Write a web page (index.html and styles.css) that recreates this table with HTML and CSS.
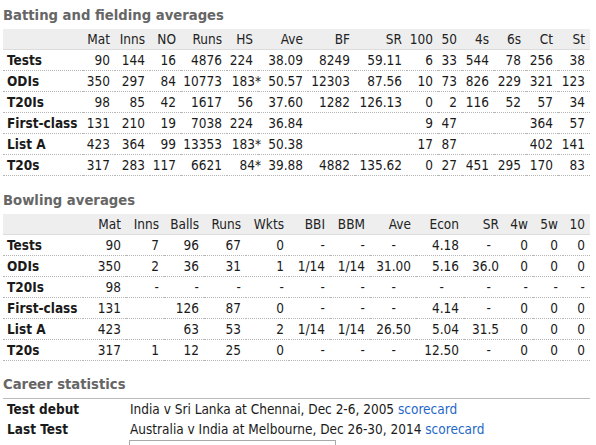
FILE: index.html
```html
<!DOCTYPE html>
<html>
<head>
<meta charset="utf-8">
<link rel="stylesheet" href="styles.css">
</head>
<body>
<div class="page">
  <h2 class="sec-title first">Batting and fielding averages</h2>
  <table class="stats bat">
    <colgroup>
      <col class="w80"><col class="w32"><col class="w35"><col class="w31"><col class="w46"><col class="w31"><col class="w50"><col class="w47"><col class="w52"><col class="w31"><col class="w24"><col class="w32"><col class="w32"><col class="w32"><col class="w32">
    </colgroup>
    <thead>
      <tr><th></th><th>Mat</th><th>Inns</th><th>NO</th><th>Runs</th><th>HS</th><th>Ave</th><th>BF</th><th>SR</th><th>100</th><th>50</th><th>4s</th><th>6s</th><th>Ct</th><th>St</th></tr>
    </thead>
    <tbody>
      <tr><td class="lbl">Tests</td><td>90</td><td>144</td><td>16</td><td>4876</td><td>224</td><td>38.09</td><td>8249</td><td>59.11</td><td>6</td><td>33</td><td>544</td><td>78</td><td>256</td><td>38</td></tr>
      <tr><td class="lbl">ODIs</td><td>350</td><td>297</td><td>84</td><td>10773</td><td>183<span class="no">*</span></td><td>50.57</td><td>12303</td><td>87.56</td><td>10</td><td>73</td><td>826</td><td>229</td><td>321</td><td>123</td></tr>
      <tr><td class="lbl">T20Is</td><td>98</td><td>85</td><td>42</td><td>1617</td><td>56</td><td>37.60</td><td>1282</td><td>126.13</td><td>0</td><td>2</td><td>116</td><td>52</td><td>57</td><td>34</td></tr>
      <tr><td class="lbl">First-class</td><td>131</td><td>210</td><td>19</td><td>7038</td><td>224</td><td>36.84</td><td></td><td></td><td>9</td><td>47</td><td></td><td></td><td>364</td><td>57</td></tr>
      <tr><td class="lbl">List A</td><td>423</td><td>364</td><td>99</td><td>13353</td><td>183<span class="no">*</span></td><td>50.38</td><td></td><td></td><td>17</td><td>87</td><td></td><td></td><td>402</td><td>141</td></tr>
      <tr><td class="lbl">T20s</td><td>317</td><td>283</td><td>117</td><td>6621</td><td>84<span class="no">*</span></td><td>39.88</td><td>4882</td><td>135.62</td><td>0</td><td>27</td><td>451</td><td>295</td><td>170</td><td>83</td></tr>
    </tbody>
  </table>

  <h2 class="sec-title">Bowling averages</h2>
  <table class="stats bowl">
    <colgroup>
      <col class="w80"><col class="w43"><col class="w38"><col class="w40"><col class="w42"><col class="w43"><col class="w41"><col class="w40"><col class="w46"><col class="w48"><col class="w40"><col class="w29"><col class="w30"><col class="w27">
    </colgroup>
    <thead>
      <tr><th></th><th>Mat</th><th>Inns</th><th>Balls</th><th>Runs</th><th>Wkts</th><th>BBI</th><th>BBM</th><th>Ave</th><th>Econ</th><th>SR</th><th>4w</th><th>5w</th><th>10</th></tr>
    </thead>
    <tbody>
      <tr><td class="lbl">Tests</td><td>90</td><td>7</td><td>96</td><td>67</td><td>0</td><td>-</td><td>-</td><td class="d2">-</td><td>4.18</td><td class="d1">-</td><td>0</td><td>0</td><td>0</td></tr>
      <tr><td class="lbl">ODIs</td><td>350</td><td>2</td><td>36</td><td>31</td><td>1</td><td>1/14</td><td>1/14</td><td>31.00</td><td>5.16</td><td>36.0</td><td>0</td><td>0</td><td>0</td></tr>
      <tr><td class="lbl">T20Is</td><td>98</td><td>-</td><td>-</td><td>-</td><td>-</td><td>-</td><td>-</td><td class="d2">-</td><td class="d2">-</td><td class="d1">-</td><td>-</td><td>-</td><td>-</td></tr>
      <tr><td class="lbl">First-class</td><td>131</td><td></td><td>126</td><td>87</td><td>0</td><td>-</td><td>-</td><td class="d2">-</td><td>4.14</td><td class="d1">-</td><td>0</td><td>0</td><td>0</td></tr>
      <tr><td class="lbl">List A</td><td>423</td><td></td><td>63</td><td>53</td><td>2</td><td>1/14</td><td>1/14</td><td>26.50</td><td>5.04</td><td>31.5</td><td>0</td><td>0</td><td>0</td></tr>
      <tr><td class="lbl">T20s</td><td>317</td><td>1</td><td>12</td><td>25</td><td>0</td><td>-</td><td>-</td><td class="d2">-</td><td>12.50</td><td class="d1">-</td><td>0</td><td>0</td><td>0</td></tr>
    </tbody>
  </table>

  <h2 class="sec-title career-title">Career statistics</h2>
  <div class="career">
    <div class="c-lbl">Test debut</div>
    <div class="c-val">India v Sri Lanka at Chennai, Dec 2-6, 2005 <a class="link" href="#">scorecard</a></div>
    <div class="c-lbl">Last Test</div>
    <div class="c-val">Australia v India at Melbourne, Dec 26-30, 2014 <a class="link" href="#">scorecard</a></div>
    <div class="c-lbl"></div>
    <div class="c-val"><div class="boxed"></div></div>
  </div>
</div>
</body>
</html>
```

FILE: styles.css
```css
html, body {
  margin: 0;
  padding: 0;
  background: #fff;
}
body {
  font-family: "DejaVu Sans Condensed", "DejaVu Sans", "Liberation Sans", sans-serif;
  font-size: 13.5px;
  color: #1a1a1a;
  overflow: hidden;
}
.page {
  padding-left: 3px;
  width: 587px;
}
.sec-title {
  margin: 14px 0 4px 0;
  font-size: 14.7px;
  line-height: 20px;
  font-weight: bold;
  color: #666;
}
.sec-title.first {
  margin-top: 0;
  padding-top: 5px;
}
.career-title {
  margin-top: 13px;
  margin-bottom: 0;
  padding-bottom: 4px;
  border-bottom: 1px solid #bbb;
}
.stats {
  width: 587px;
  table-layout: fixed;
  border-collapse: collapse;
  border-spacing: 0;
}
.stats th,
.stats td {
  height: 20px;
  padding: 0 5px 0 0;
  line-height: 20px;
  text-align: right;
  white-space: nowrap;
  font-weight: normal;
  vertical-align: middle;
}
.stats thead th {
  background: #eeeeee;
  border-bottom: 1px solid #dcdcdc;
  color: #222;
}
.stats tbody td {
  border-bottom: 1px dotted #b5b5b5;
}
.stats td.lbl {
  text-align: left;
  padding-left: 4px;
  font-weight: bold;
  color: #1a1a1a;
  overflow: visible;
}
.stats .no {
  margin-right: -8px;
}
.stats td.d2 { padding-right: 20px; }
.stats td.d1 { padding-right: 13px; }

.w24 { width: 24px; }
.w27 { width: 27px; }
.w29 { width: 29px; }
.w30 { width: 30px; }
.w31 { width: 31px; }
.w32 { width: 32px; }
.w35 { width: 35px; }
.w38 { width: 38px; }
.w40 { width: 40px; }
.w41 { width: 41px; }
.w42 { width: 42px; }
.w43 { width: 43px; }
.w46 { width: 46px; }
.w47 { width: 47px; }
.w48 { width: 48px; }
.w50 { width: 50px; }
.w52 { width: 52px; }
.w80 { width: 80px; }

.career {
  display: grid;
  grid-template-columns: 127px 1fr;
  line-height: 20px;
}
.c-lbl {
  padding-left: 4px;
  font-weight: bold;
  color: #1a1a1a;
}
.c-val {
  color: #1a1a1a;
}
.link {
  color: #1f68c8;
  text-decoration: none;
}
.boxed {
  margin: 1px 0 0 -1px;
  width: 205px;
  height: 24px;
  border: 1px solid #a8a8a8;
}
```
